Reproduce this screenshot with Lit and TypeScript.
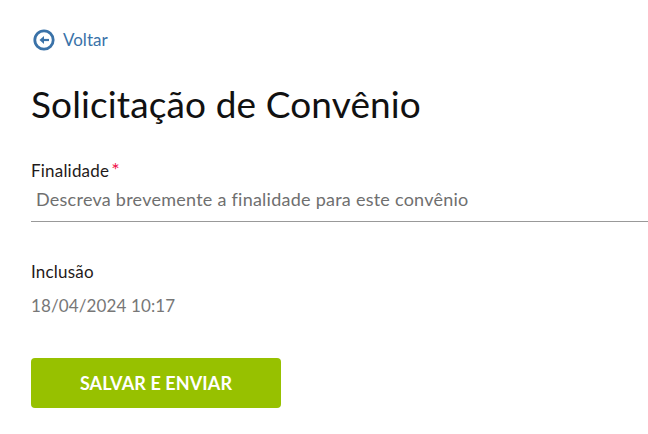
import { LitElement, html, css } from "lit";
import { customElement } from "lit/decorators.js";

@customElement("app-root")
export class AppRoot extends LitElement {
  static styles = css`
    :host { display: block; width: 648px; height: 434px; overflow: hidden; background: #fff; font-family: "Lato", "Noto Sans", sans-serif; color: #1a1a1a; }
    .page { display: flex; flex-direction: column; align-items: flex-start; padding: 28px 0 0 31px; }
    .back { display: flex; align-items: center; gap: 8px; padding-left: 2px; height: 24px; color: #3a72a8; font-size: 17px; }
    .back span { position: relative; top: -1px; }
    h1 { margin: 30px 0 0; font-size: 37px; font-weight: 400; line-height: 44px; letter-spacing: 0.12px; color: #111; }
    .label { font-size: 17px; line-height: 20px; letter-spacing: 0.2px; color: #1f1a1a; }
    .req { color: #f0104a; margin-left: 2px; font-size: 20px; line-height: 20px; }
    .field { align-self: stretch; margin-top: 33px; }
    .input { height: 40px; box-sizing: content-box; padding: 0 0 0 5px; border-bottom: 1px solid #999; line-height: 37px; font-size: 18px; letter-spacing: 0.25px; color: #6f6f6f; }
    .inc { margin-top: 40px; }
    .value { margin-top: 14px; font-size: 17px; line-height: 20px; letter-spacing: 0.12px; color: #777; }
    button { margin-top: 42px; width: 250px; height: 50px; border: 0; border-radius: 4px; background: #97c100; color: #fff; font: 700 18px "Lato", sans-serif; letter-spacing: 0.1px; }
  `;
  render() {
    return html`<div class="page">
      <div class="back">
        <svg width="22" height="22" viewBox="0 0 22 22" fill="none">
          <circle cx="11" cy="11" r="9.2" stroke="#3a72a8" stroke-width="2.8"/>
          <path d="M16 11H9" stroke="#3a72a8" stroke-width="2.2"/>
          <path d="M11 7 6.5 11l4.5 4z" fill="#3a72a8"/>
        </svg>
        <span>Voltar</span>
      </div>
      <h1>Solicitação de Convênio</h1>
      <div class="field">
        <div class="label">Finalidade<span class="req">*</span></div>
        <div class="input">Descreva brevemente a finalidade para este convênio</div>
      </div>
      <div class="label inc">Inclusão</div>
      <div class="value">18/04/2024 10:17</div>
      <button>SALVAR E ENVIAR</button>
    </div>`;
  }
}
